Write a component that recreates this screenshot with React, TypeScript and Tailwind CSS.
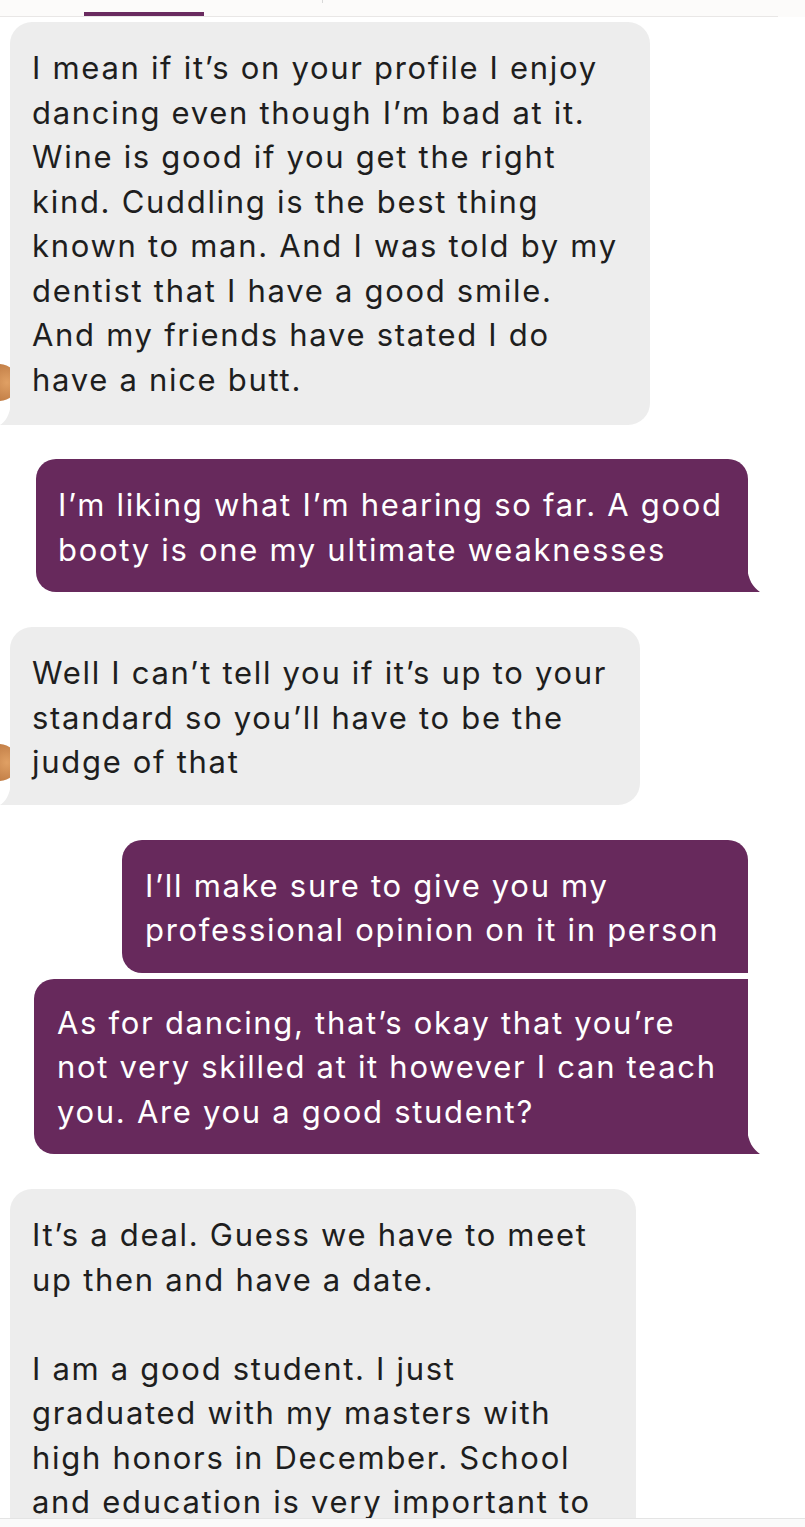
import React from "react";

const PURPLE = "#67295c";

function GrayTail() {
  return (
    <svg className="absolute left-[-10px] bottom-0" width="11" height="22" viewBox="0 0 11 22">
      <path d="M11 0 L11 22 L0 22 C5 19 10 12 11 0 Z" fill="#ededed" />
    </svg>
  );
}

function PurpleTail() {
  return (
    <svg className="absolute right-[-13px] bottom-0" width="14" height="26" viewBox="0 0 14 26">
      <path d="M0 0 C1 14 6 21 13 26 L0 26 Z" fill={PURPLE} />
    </svg>
  );
}

function Avatar() {
  return (
    <div className="absolute left-[-29px] bottom-[24px] h-[37px] w-[37px] rounded-full bg-[radial-gradient(circle_at_70%_50%,#e0a064,#b06a35)]" />
  );
}

function Lines({ lines }: { lines: string[] }) {
  return (
    <div className="flex flex-col">
      {lines.map((l, i) => (
        <div key={i} className="whitespace-nowrap h-[44.5px]">
          {l === "" ? "\u00a0" : l}
        </div>
      ))}
    </div>
  );
}

function Received({
  width,
  lines,
  className = "",
  pad,
}: {
  width: string;
  lines: string[];
  className?: string;
  pad: string;
}) {
  return (
    <div className={`relative ml-[10px] shrink-0 ${width} ${className}`}>
      <Avatar />
      <div className={`relative rounded-[22px] rounded-bl-none bg-[#ededed] pl-[22px] pt-[24px] ${pad} text-[#1e1e1e]`}>
        <Lines lines={lines} />
        <GrayTail />
      </div>
    </div>
  );
}

export default function App() {
  return (
    <div
      className="flex flex-col w-[805px] h-[1527px] overflow-hidden bg-white text-[31px] leading-[44.5px] tracking-[1.7px]"
      style={{ fontFamily: "Inter, 'Noto Sans', sans-serif" }}
    >
      {/* top bar */}
      <div className="h-[17px] shrink-0 bg-[#fcfbfa]">
        <div className="flex h-[17px] w-[778px] items-start border-b border-[#e9e7e6] pl-[84px]">
          <div className="mt-[12px] h-[4px] w-[120px] bg-[#6a2b60]" />
          <div className="ml-[118px] h-[3px] w-px bg-[#d8d8d8]" />
        </div>
      </div>

      {/* chat */}
      <div className="flex flex-1 flex-col overflow-hidden pt-[5px]">
        <Received
          width="w-[640px]"
          pad="pb-[23px]"
          lines={[
            "I mean if it’s on your profile I enjoy",
            "dancing even though I’m bad at it.",
            "Wine is good if you get the right",
            "kind. Cuddling is the best thing",
            "known to man. And I was told by my",
            "dentist that I have a good smile.",
            "And my friends have stated I do",
            "have a nice butt.",
          ]}
        />

        <div className="relative mt-[34px] ml-[36px] w-[712px] shrink-0 rounded-[20px] rounded-br-none bg-[#67295c] pl-[22px] pt-[24px] pb-[20px] text-white">
          <Lines lines={["I’m liking what I’m hearing so far. A good", "booty is one my ultimate weaknesses"]} />
          <PurpleTail />
        </div>

        <Received
          width="w-[630px]"
          pad="pb-[20px]"
          className="mt-[35px]"
          lines={["Well I can’t tell you if it’s up to your", "standard so you’ll have to be the", "judge of that"]}
        />

        <div className="mt-[35px] ml-[122px] w-[626px] shrink-0 rounded-[20px] rounded-br-none bg-[#67295c] pl-[23px] pt-[24px] pb-[20px] text-white">
          <Lines lines={["I’ll make sure to give you my", "professional opinion on it in person"]} />
        </div>

        <div className="relative mt-[6px] ml-[34px] w-[714px] shrink-0 rounded-[20px] rounded-tr-none rounded-br-none bg-[#67295c] pl-[23px] pt-[22px] pb-[20px] text-white">
          <Lines
            lines={[
              "As for dancing, that’s okay that you’re",
              "not very skilled at it however I can teach",
              "you. Are you a good student?",
            ]}
          />
          <PurpleTail />
        </div>

        <div className="mt-[35px] ml-[10px] w-[626px] shrink-0 rounded-t-[22px] bg-[#ededed] pl-[22px] pt-[24px] pb-[40px] text-[#1e1e1e]">
          <Lines
            lines={[
              "It’s a deal. Guess we have to meet",
              "up then and have a date.",
              "",
              "I am a good student. I just",
              "graduated with my masters with",
              "high honors in December. School",
              "and education is very important to",
            ]}
          />
        </div>
      </div>

      {/* bottom bar */}
      <div className="h-[9px] shrink-0 border-t border-[#e4e4e4] bg-[#fafafa]" />
    </div>
  );
}
